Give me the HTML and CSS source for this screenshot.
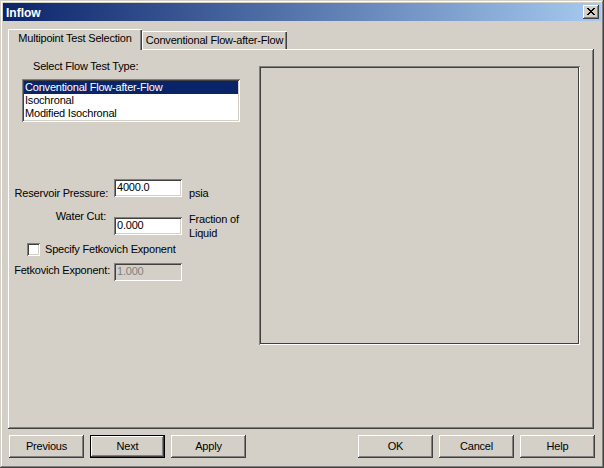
FILE: index.html
```html
<!DOCTYPE html>
<html>
<head>
<meta charset="utf-8">
<title>Inflow</title>
<link rel="stylesheet" href="styles.css">
</head>
<body>
<div class="window">
  <div class="titlebar">
    <span class="title">Inflow</span>
    <span class="close">
      <svg width="8" height="7" viewBox="0 0 8 7"><path fill="#000" d="M0 0h2v1h-2z M6 0h2v1h-2z M1 1h2v1h-2z M5 1h2v1h-2z M2 2h4v1h-4z M3 3h2v1h-2z M2 4h4v1h-4z M1 5h2v1h-2z M5 5h2v1h-2z M0 6h2v1h-2z M6 6h2v1h-2z"/></svg>
    </span>
  </div>
  <div class="tabs">
    <div class="tab tab-active">Multipoint Test Selection</div>
    <div class="tab tab-second">Conventional Flow-after-Flow</div>
  </div>
  <div class="panel">
    <div class="left">
      <div class="list-label">Select Flow Test Type:</div>
      <div class="listbox">
        <div class="item item-sel">Conventional Flow-after-Flow</div>
        <div class="item">Isochronal</div>
        <div class="item">Modified Isochronal</div>
      </div>
      <div class="row row-pressure">
        <div class="lbl lbl-pressure">Reservoir Pressure:</div>
        <div class="edit">4000.0</div>
        <div class="unit unit-pressure">psia</div>
      </div>
      <div class="row row-water">
        <div class="lbl lbl-water">Water Cut:</div>
        <div class="edit edit-water">0.000</div>
        <div class="unit unit-water">Fraction of<br>Liquid</div>
      </div>
      <div class="row row-check">
        <span class="check"></span>
        <span class="check-text">Specify Fetkovich Exponent</span>
      </div>
      <div class="row row-fet">
        <div class="lbl lbl-fet">Fetkovich Exponent:</div>
        <div class="edit edit-disabled">1.000</div>
      </div>
    </div>
    <div class="frame"></div>
  </div>
  <div class="buttons">
    <div class="btn">Previous</div>
    <div class="btn btn-default">Next</div>
    <div class="btn">Apply</div>
    <div class="btn btn-ok">OK</div>
    <div class="btn">Cancel</div>
    <div class="btn">Help</div>
  </div>
</div>
</body>
</html>
```
FILE: styles.css
```css
html, body {
  margin: 0;
  padding: 0;
  background: #d4d0c8;
}

.window {
  width: 604px;
  height: 468px;
  box-sizing: border-box;
  padding: 3px;
  background: #d4d0c8;
  box-shadow: inset -1px -1px #404040, inset 1px 1px #d4d0c8, inset -2px -2px #808080, inset 2px 2px #ffffff;
  font-family: "Liberation Sans", Arial, sans-serif;
  font-size: 11px;
  line-height: 13px;
  letter-spacing: -0.2px;
  color: #000;
  overflow: hidden;
}

.titlebar {
  height: 18px;
  display: flex;
  justify-content: space-between;
  align-items: flex-start;
  background: linear-gradient(to right, #0a246a, #a6caf0);
}

.title {
  color: #fff;
  font-weight: bold;
  font-size: 12px;
  line-height: 14px;
  letter-spacing: 0;
  padding: 3px 0 0 3px;
}

.close {
  width: 16px;
  height: 14px;
  margin: 2px 2px 0 0;
  box-sizing: border-box;
  background: #d4d0c8;
  box-shadow: inset -1px -1px #404040, inset 1px 1px #ffffff, inset -2px -2px #808080, inset 2px 2px #d4d0c8;
  display: flex;
  justify-content: center;
  align-items: flex-start;
  padding: 3px 1px 0 0;
}

.close svg {
  display: block;
  shape-rendering: crispEdges;
}

.tabs {
  display: flex;
  align-items: flex-end;
  height: 20px;
  margin: 8px 0 0 5px;
}

.tab {
  box-sizing: border-box;
  padding-top: 3px;
  text-align: center;
  white-space: nowrap;
  background: #d4d0c8;
  box-shadow: inset 1px 1px #ffffff, inset -1px 0 #404040, inset -2px 0 #808080;
}

.tab-active {
  width: 134px;
  height: 21px;
  margin-bottom: -1px;
  position: relative;
  z-index: 1;
}

.tab-second {
  width: 145px;
  height: 18px;
  padding-top: 3px;
}

.panel {
  width: 586px;
  height: 380px;
  margin-left: 5px;
  box-sizing: border-box;
  padding: 1px 0 0 1px;
  display: flex;
  align-items: flex-start;
  box-shadow: inset -1px -1px #404040, inset 1px 1px #ffffff, inset -2px -2px #808080;
}

.left {
  width: 250px;
  flex: none;
}

.list-label {
  margin-top: 10px;
  padding-left: 24px;
}

.listbox {
  width: 218px;
  height: 43px;
  margin: 6px 0 0 13px;
  box-sizing: border-box;
  padding: 2px;
  background: #fff;
  box-shadow: inset 1px 1px #808080, inset -1px -1px #ffffff, inset 2px 2px #404040, inset -2px -2px #d4d0c8;
}

.item {
  height: 13px;
  line-height: 13px;
  padding-left: 1px;
  white-space: nowrap;
}

.item-sel {
  background: #0a246a;
  color: #fff;
}

.row {
  display: flex;
  align-items: flex-start;
}

.row-pressure { margin-top: 57px; }
.row-water { margin-top: 10px; }
.row-check { margin-top: 3px; }
.row-fet { margin-top: 7px; }

.lbl {
  width: 102px;
  box-sizing: border-box;
  text-align: right;
  white-space: nowrap;
  flex: none;
}

.lbl-pressure { margin-top: 8px; padding-right: 3px; }
.lbl-water { padding-right: 5px; }
.lbl-fet { margin-top: 1px; padding-right: 1px; }

.edit {
  width: 68px;
  height: 18px;
  margin-left: 3px;
  box-sizing: border-box;
  padding: 2px 0 0 3px;
  line-height: 12px;
  background: #fff;
  box-shadow: inset 1px 1px #808080, inset -1px -1px #ffffff, inset 2px 2px #404040, inset -2px -2px #d4d0c8;
  flex: none;
}

.edit-water { margin-top: 7px; }

.edit-disabled {
  background: #d4d0c8;
  color: #808080;
}

.unit {
  margin-left: 7px;
  white-space: nowrap;
}

.unit-pressure { margin-top: 8px; }
.unit-water { margin-top: 2px; line-height: 14px; }

.check {
  width: 13px;
  height: 13px;
  margin-left: 18px;
  box-sizing: border-box;
  background: #fff;
  box-shadow: inset 1px 1px #808080, inset -1px -1px #ffffff, inset 2px 2px #404040, inset -2px -2px #d4d0c8;
  flex: none;
}

.check-text {
  margin-left: 5px;
  white-space: nowrap;
}

.frame {
  width: 321px;
  height: 279px;
  margin-top: 16px;
  flex: none;
  box-shadow: inset 1px 1px #808080, inset -1px -1px #ffffff, inset 0 0 0 2px #404040;
}

.buttons {
  display: flex;
  gap: 6px;
  width: 586px;
  margin: 6px 0 0 6px;
}

.btn {
  width: 75px;
  height: 23px;
  box-sizing: border-box;
  padding-top: 5px;
  text-align: center;
  flex: none;
  background: #d4d0c8;
  box-shadow: inset -1px -1px #404040, inset 1px 1px #ffffff, inset -2px -2px #808080, inset 2px 2px #d4d0c8;
}

.btn-default {
  box-shadow: inset 0 0 0 1px #000000, inset -2px -2px #404040, inset 2px 2px #ffffff, inset -3px -3px #808080;
}

.btn-ok {
  margin-left: auto;
}
```
